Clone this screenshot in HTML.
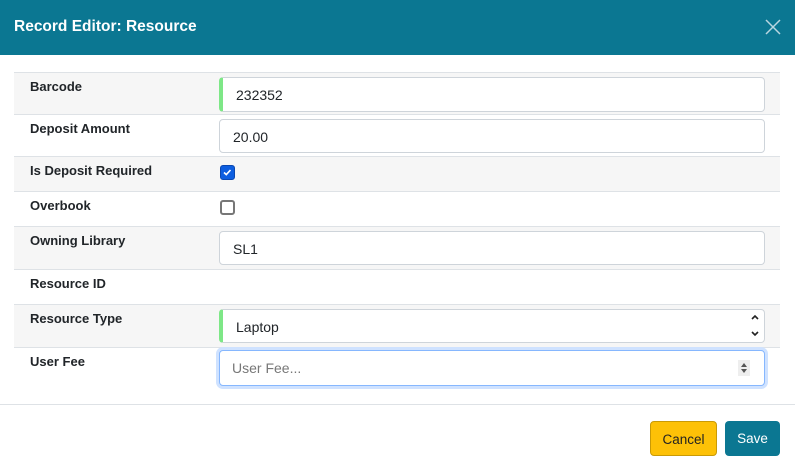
<!DOCTYPE html>
<html><head><style>
*{box-sizing:border-box;margin:0;padding:0}
body{width:795px;height:469px;background:#fff;font-family:"Liberation Sans",sans-serif;font-size:13px;color:#212529;position:relative;overflow:hidden}
.hdr{position:absolute;left:0;top:0;width:795px;height:55px;background:#0b7792;color:#fff}
.hdr h1{position:absolute;left:14px;top:18px;font-size:15.5px;font-weight:bold}
.x{position:absolute;left:765px;top:19px;width:16px;height:16px}
.row{position:absolute;left:14px;width:766px;border-top:1px solid #dee2e6}
.g{background:#f6f6f6}
.lbl{position:absolute;left:16px;top:6px;font-weight:bold;font-size:13px}
.inp{position:absolute;left:205px;top:4px;width:546px;height:34px;background:#fff;border:1px solid #ced4da;border-radius:4px;padding:9px 0 0 13px;font-size:14px}
.grn{border-left:4px solid #7ee787;padding-left:13px}
.cb{position:absolute;left:206px;width:15px;height:15px;border-radius:3px}
.btn{position:absolute;top:421px;height:35px;border-radius:4px;font-size:13.5px;padding-top:10px;text-align:center}
</style></head><body>
<div class="hdr"><h1>Record Editor: Resource</h1>
<svg class="x" viewBox="0 0 16 16"><path d="M1 1L15 15M15 1L1 15" stroke="#b9d6e0" stroke-width="1.5"/></svg></div>
<div class="row g" style="top:72px;height:42px"><div class="lbl">Barcode</div><div class="inp grn" style="height:35px">232352</div></div>
<div class="row" style="top:114px;height:42px"><div class="lbl">Deposit Amount</div><div class="inp">20.00</div></div>
<div class="row g" style="top:156px;height:35px"><div class="lbl">Is Deposit Required</div>
<div class="cb" style="top:8px;background:#0d5ee0;border:1px solid #0a47b0"><svg width="13" height="13" viewBox="0 0 13 13"><path d="M3 6.5L5.3 8.6L9.5 4" stroke="#fff" stroke-width="1.6" fill="none"/></svg></div></div>
<div class="row" style="top:191px;height:35px"><div class="lbl">Overbook</div><div class="cb" style="top:8px;border:2px solid #777"></div></div>
<div class="row g" style="top:226px;height:43px"><div class="lbl">Owning Library</div><div class="inp">SL1</div></div>
<div class="row" style="top:269px;height:35px"><div class="lbl">Resource ID</div></div>
<div class="row g" style="top:304px;height:43px"><div class="lbl">Resource Type</div><div class="inp grn">Laptop
<svg style="position:absolute;right:4px;top:3px" width="10" height="26" viewBox="0 0 10 26"><path d="M2 6L5 3L8 6M2 19L5 22L8 19" stroke="#222" stroke-width="1.6" fill="none"/></svg></div></div>
<div class="row" style="top:347px;height:57px"><div class="lbl">User Fee</div>
<div class="inp" style="top:2px;height:36px;border:1px solid #86b7fe;box-shadow:0 0 0 3px #cfe2ff;color:#777;padding-left:12px">User Fee...
<div style="position:absolute;right:14px;top:9px;width:12px;height:16px;background:#eee"><svg width="12" height="16" viewBox="0 0 12 16"><path d="M3 7L6 3L9 7ZM3 9L6 13L9 9Z" fill="#555"/></svg></div></div></div>
<div style="position:absolute;left:0;top:404px;width:795px;border-top:1px solid #dee2e6"></div>
<div class="btn" style="left:650px;width:67px;background:#fdc107;border:1px solid #c99a06;color:#222">Cancel</div>
<div class="btn" style="left:725px;width:55px;background:#0b7792;color:#fff">Save</div>
</body></html>
